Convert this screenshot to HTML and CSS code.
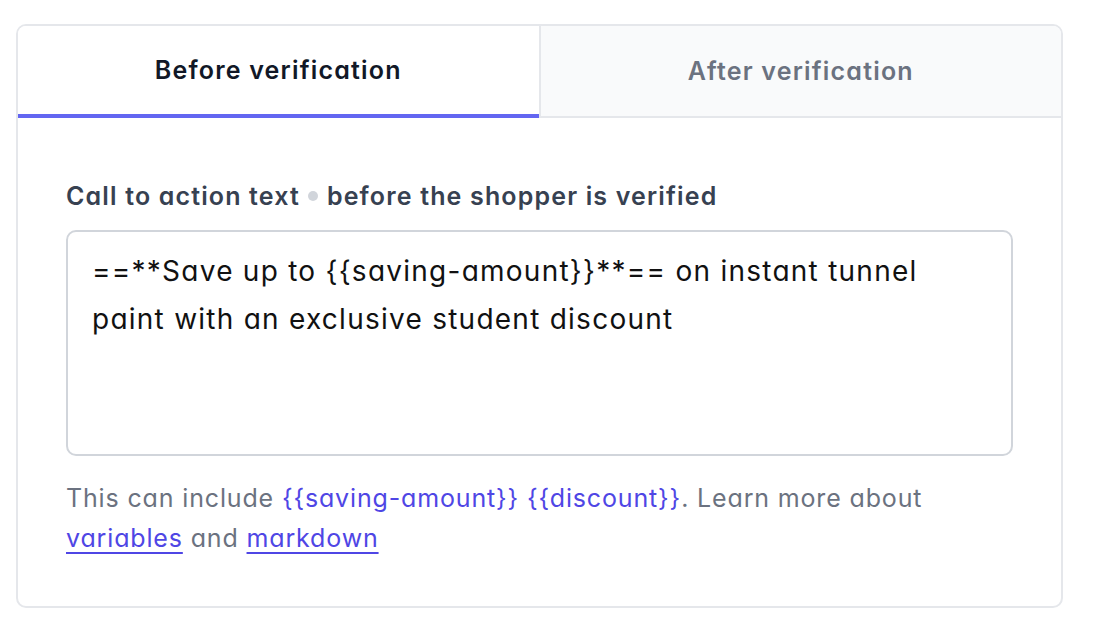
FILE: index.html
```html
<!DOCTYPE html>
<html>
<head>
<meta charset="utf-8">
<link rel="stylesheet" href="styles.css">
</head>
<body>
<div class="card">
  <div class="tabs">
    <div class="tab active">Before verification</div>
    <div class="tab">After verification</div>
  </div>
  <div class="body">
    <div class="label">Call to action text <span class="dot"></span> before the shopper is verified</div>
    <div class="textarea">==**Save up to {{saving-amount}}**== on instant tunnel paint with an exclusive student discount</div>
    <p class="help">This can include <span class="var">{{saving-amount}}</span> <span class="var">{{discount}}</span>. Learn more about <a href="#">variables</a> and <a href="#">markdown</a></p>
  </div>
</div>
</body>
</html>
```

FILE: styles.css
```css
html, body { margin: 0; padding: 0; background: #fff; }
body {
  font-family: Inter, "Noto Sans", sans-serif;
  font-feature-settings: "cv11" 1;
  padding: 24px 0 0 16px;
}
.card {
  width: 1047px;
  box-sizing: border-box;
  border: 2px solid #e5e7eb;
  border-radius: 10px;
  overflow: hidden;
}
.tabs {
  display: flex;
  height: 92px;
  box-sizing: border-box;
}
.tab {
  flex: 1;
  display: flex;
  align-items: center;
  justify-content: center;
  font-size: 25px;
  font-weight: 600;
  color: #6b7280;
  background: #f9fafb;
  border-bottom: 2px solid #e5e7eb;
  border-left: 2px solid #e5e7eb;
  letter-spacing: 1.2px;
}
.tab.active {
  color: #111827;
  background: #fff;
  border-left: none;
  border-bottom: 4px solid #6366f1;
}
.body {
  padding: 62px 48px 48px 48px;
}
.label {
  font-size: 25px;
  font-weight: 600;
  color: #374151;
  line-height: 32px;
  letter-spacing: 1.15px;
}
.dot {
  display: inline-block;
  width: 10px;
  height: 10px;
  border-radius: 50%;
  background: #d1d5db;
  vertical-align: 4px;
  margin: 0 1px;
}
.textarea {
  margin-top: 18px;
  height: 226px;
  box-sizing: border-box;
  border: 2px solid #d1d5db;
  border-radius: 10px;
  padding: 15px 24px;
  font-size: 28px;
  line-height: 48px;
  color: #111;
  letter-spacing: 1.25px;
}
.help {
  margin: 22px 0 0;
  font-size: 25px;
  line-height: 40px;
  color: #6b7280;
  letter-spacing: 0.85px;
}
.var { color: #4f46e5; }
.help a { color: #4f46e5; text-decoration: underline; text-underline-offset: 5px; text-decoration-thickness: 2px; }
```
